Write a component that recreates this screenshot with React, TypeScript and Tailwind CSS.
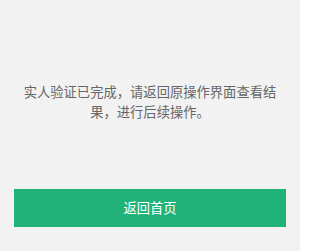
import React from "react";

const FONT = { fontFamily: '"Noto Sans CJK SC", "Liberation Sans", sans-serif' };

export default function App() {
  return (
    <div
      className="w-[300px] h-[251px] bg-[#f2f2f2] flex flex-col"
      style={FONT}
    >
      <p className="pt-[82px] px-[20px] text-center text-[13.3px] leading-[20px] text-[#666666]">
        实人验证已完成，请返回原操作界面查看结果，进行后续操作。
      </p>
      <button className="mt-[67px] mx-[14px] h-[38px] bg-[#21b27a] text-white text-[13.3px] flex items-center justify-center">
        返回首页
      </button>
    </div>
  );
}
